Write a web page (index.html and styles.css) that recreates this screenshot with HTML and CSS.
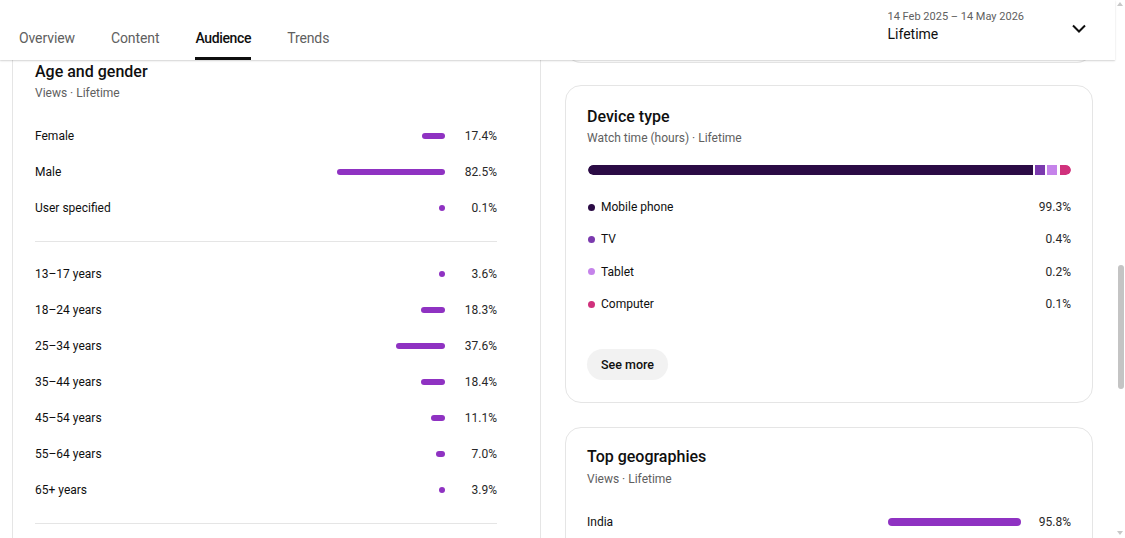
FILE: index.html
```html
<!DOCTYPE html>
<html lang="en">
<head>
<meta charset="utf-8">
<title>Audience</title>
<link rel="stylesheet" href="styles.css">
</head>
<body>
<div class="page">
  <div class="main">
    <header class="topbar">
      <nav class="tabs">
        <span class="tab">Overview</span>
        <span class="tab">Content</span>
        <span class="tab active">Audience</span>
        <span class="tab">Trends</span>
      </nav>
      <div class="range">
        <div class="range-text">
          <div class="range-dates">14 Feb 2025 – 14 May 2026</div>
          <div class="range-label">Lifetime</div>
        </div>
        <svg class="chevron" width="24" height="24" viewBox="0 0 24 24"><path d="M6 9.5l6 6 6-6" fill="none" stroke="#0f0f0f" stroke-width="2"/></svg>
      </div>
    </header>

    <div class="content">
      <section class="card age-card">
        <h2 class="card-title">Age and gender</h2>
        <div class="card-sub">Views · Lifetime</div>

        <div class="group">
          <div class="row"><span class="label">Female</span><span class="track"><span class="bar" style="width:22.8px"></span></span><span class="value">17.4%</span></div>
          <div class="row"><span class="label">Male</span><span class="track"><span class="bar" style="width:108px"></span></span><span class="value">82.5%</span></div>
          <div class="row"><span class="label">User specified</span><span class="track"><span class="bar" style="width:0.1px"></span></span><span class="value">0.1%</span></div>
        </div>
        <div class="divider"></div>
        <div class="group after-divider">
          <div class="row"><span class="label">13–17 years</span><span class="track"><span class="bar" style="width:4.7px"></span></span><span class="value">3.6%</span></div>
          <div class="row"><span class="label">18–24 years</span><span class="track"><span class="bar" style="width:24px"></span></span><span class="value">18.3%</span></div>
          <div class="row"><span class="label">25–34 years</span><span class="track"><span class="bar" style="width:49.3px"></span></span><span class="value">37.6%</span></div>
          <div class="row"><span class="label">35–44 years</span><span class="track"><span class="bar" style="width:24.1px"></span></span><span class="value">18.4%</span></div>
          <div class="row"><span class="label">45–54 years</span><span class="track"><span class="bar" style="width:14.5px"></span></span><span class="value">11.1%</span></div>
          <div class="row"><span class="label">55–64 years</span><span class="track"><span class="bar" style="width:9.2px"></span></span><span class="value">7.0%</span></div>
          <div class="row"><span class="label">65+ years</span><span class="track"><span class="bar" style="width:5.1px"></span></span><span class="value">3.9%</span></div>
        </div>
        <div class="divider"></div>
      </section>

      <div class="col-right">
        <div class="card-tail"></div>

        <section class="card device-card">
          <h2 class="card-title">Device type</h2>
          <div class="card-sub">Watch time (hours) · Lifetime</div>
          <div class="stack">
            <span class="seg seg-mobile"></span>
            <span class="seg seg-tv"></span>
            <span class="seg seg-tablet"></span>
            <span class="seg seg-computer"></span>
          </div>
          <div class="legend">
            <div class="legend-row"><span class="dot dot-mobile"></span><span class="label">Mobile phone</span><span class="value">99.3%</span></div>
            <div class="legend-row"><span class="dot dot-tv"></span><span class="label">TV</span><span class="value">0.4%</span></div>
            <div class="legend-row"><span class="dot dot-tablet"></span><span class="label">Tablet</span><span class="value">0.2%</span></div>
            <div class="legend-row"><span class="dot dot-computer"></span><span class="label">Computer</span><span class="value">0.1%</span></div>
          </div>
          <button class="see-more">See more</button>
        </section>

        <section class="card geo-card">
          <h2 class="card-title">Top geographies</h2>
          <div class="card-sub">Views · Lifetime</div>
          <div class="geo-list">
            <div class="row geo-row"><span class="label">India</span><span class="track geo-track"><span class="bar geo-bar" style="width:133px"></span></span><span class="value">95.8%</span></div>
          </div>
        </section>
      </div>
    </div>
  </div>

  <div class="scrollbar">
    <span class="arrow arrow-up"></span>
    <div class="sb-track"><div class="thumb"></div></div>
    <span class="arrow arrow-down"></span>
  </div>
</div>
</body>
</html>
```

FILE: styles.css
```css
* { box-sizing: border-box; }

html, body {
  margin: 0;
  padding: 0;
  background: #ffffff;
}

body {
  font-family: Roboto, "Noto Sans", Arial, sans-serif;
  color: #0f0f0f;
}

.page {
  display: flex;
  width: 1125px;
  height: 538px;
  overflow: hidden;
}

.main {
  flex: 1;
  min-width: 0;
  display: flex;
  flex-direction: column;
}

/* Header */
.topbar {
  position: relative;
  z-index: 2;
  height: 60px;
  flex: none;
  display: flex;
  align-items: stretch;
  padding-left: 19px;
  padding-right: 24px;
  background: #ffffff;
  box-shadow: 0 1px 2px rgba(0, 0, 0, 0.14), 0 1px 0 rgba(0, 0, 0, 0.04);
}

.tabs {
  display: flex;
  gap: 36px;
}

.tab {
  display: flex;
  align-items: flex-end;
  padding-bottom: 9px;
  border-bottom: 3px solid transparent;
  font-size: 14px;
  line-height: 20px;
  color: #606060;
  letter-spacing: -0.1px;
}

.tab.active {
  color: #0f0f0f;
  font-weight: 500;
  letter-spacing: -0.35px;
  border-bottom-color: #0f0f0f;
}

.range {
  margin-left: auto;
  display: flex;
  align-items: flex-start;
}

.range-text {
  padding-top: 10px;
}

.range-dates {
  font-size: 11px;
  line-height: 14px;
  color: #606060;
}

.range-label {
  font-size: 14px;
  line-height: 20px;
  color: #0f0f0f;
}

.chevron {
  margin-left: 43px;
  margin-top: 16px;
}

/* Content */
.content {
  flex: 1;
  display: flex;
  gap: 24px;
  padding: 0 22px 0 12px;
}

.card {
  background: #ffffff;
  border: 1px solid #e5e5e5;
}

.card-title {
  margin: 0;
  font-size: 16px;
  line-height: 22px;
  font-weight: 500;
  color: #0f0f0f;
}

.card-sub {
  margin-top: 1px;
  font-size: 12px;
  line-height: 18px;
  color: #606060;
}

.age-card {
  width: 529px;
  flex: none;
  border-top: none;
  padding: 1px 43px 0 22px;
}

.group {
  margin-top: 16px;
}

.group.after-divider {
  margin-top: 14px;
}

.divider {
  height: 1px;
  background: #e5e5e5;
  margin-top: 15px;
}

.row {
  display: flex;
  align-items: center;
  height: 36px;
  font-size: 12px;
  color: #0f0f0f;
}

.row .label {
  flex: 1;
}

.track {
  width: 131px;
  display: flex;
  justify-content: flex-end;
}

.bar {
  display: block;
  height: 6px;
  min-width: 6px;
  border-radius: 3px;
  background: #8f32c2;
}

.row .value {
  width: 52px;
  text-align: right;
  color: #282828;
}

/* Right column */
.col-right {
  width: 528px;
  flex: none;
  margin-top: -20px;
  display: flex;
  flex-direction: column;
}

.card-tail {
  height: 23px;
  border: 1px solid #e5e5e5;
  border-top: none;
  border-radius: 0 0 16px 16px;
}

.device-card {
  margin-top: 22px;
  border-radius: 16px;
  padding: 20px 21px 22px 21px;
}

.stack {
  margin-top: 18px;
  height: 10px;
  display: flex;
  gap: 2px;
  border-radius: 5px;
  overflow: hidden;
  margin-left: 1px;
}

.seg { display: block; height: 10px; }
.seg-mobile { flex: 1; background: #2b0b45; border-radius: 5px 0 0 5px; }
.seg-tv { width: 10px; background: #7b3aae; }
.seg-tablet { width: 10px; background: #c583ea; margin-right: 1px; }
.seg-computer { width: 11px; background: #d0317c; border-radius: 0 5px 5px 0; }

.legend {
  margin-top: 16px;
}

.legend-row {
  display: flex;
  align-items: center;
  height: 32.3px;
  font-size: 12px;
  color: #0f0f0f;
}

.legend-row .label {
  flex: 1;
}

.legend-row .value {
  color: #282828;
}

.dot {
  width: 7px;
  height: 7px;
  border-radius: 50%;
  margin-left: 1px;
  margin-right: 6px;
}

.dot-mobile { background: #2b0b45; }
.dot-tv { background: #7b3aae; }
.dot-tablet { background: #c583ea; }
.dot-computer { background: #d0317c; }

.see-more {
  display: block;
  margin-top: 29px;
  height: 31px;
  padding: 0 14px;
  border: none;
  border-radius: 16px;
  background: #f2f2f2;
  font-family: Roboto, "Noto Sans", Arial, sans-serif;
  font-size: 12.5px;
  font-weight: 500;
  color: #0f0f0f;
}

.geo-card {
  margin-top: 24px;
  border-radius: 16px;
  padding: 18px 21px 21px 21px;
}

.geo-card .card-sub {
  margin-top: 2px;
}

.geo-list {
  margin-top: 16px;
}

.geo-track {
  width: 139px;
  justify-content: flex-end;
}

.geo-bar {
  height: 8px;
  border-radius: 4px;
}

.geo-row .value {
  width: 50px;
}

/* Scrollbar */
.scrollbar {
  width: 10px;
  flex: none;
  display: flex;
  flex-direction: column;
  align-items: center;
  background: #ffffff;
}

.arrow {
  display: block;
  width: 0;
  height: 0;
  border-left: 3px solid transparent;
  border-right: 3px solid transparent;
}

.arrow-up {
  margin-top: 2px;
  margin-bottom: 8px;
  border-bottom: 4px solid #c8c8c8;
}

.arrow-down {
  margin-top: 8px;
  margin-bottom: 3px;
  border-top: 4px solid #c8c8c8;
}

.sb-track {
  flex: 1;
  width: 100%;
  display: flex;
  justify-content: center;
}

.thumb {
  width: 6px;
  height: 124px;
  margin-top: 251px;
  margin-left: 1px;
  border-radius: 3px;
  background: #c4c4c4;
}
```
